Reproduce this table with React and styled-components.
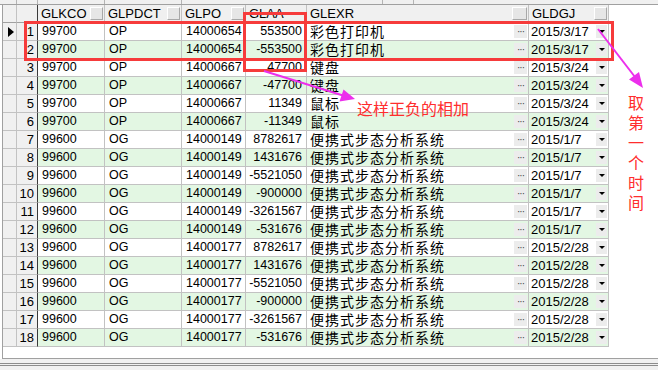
import React from 'react';
import styled, { createGlobalStyle } from 'styled-components';

const GlobalStyle = createGlobalStyle`
  html, body {
    margin: 0;
    padding: 0;
    background: #ffffff;
  }
  body {
    width: 658px;
    height: 370px;
    overflow: hidden;
    font-family: "Liberation Sans", Arial, sans-serif;
  }
`;

const COLS = '14px 21px 67px 77px 64px 61px 222px 80px';
const GREEN = '#e3f7e3';
const LINE = '#c2c2c2';
const RED = '#f63b3b';

const Screen = styled.div`
  position: relative;
  width: 658px;
  height: 370px;
  display: flex;
  flex-direction: column;
  background: #fff;
`;

const TopStrip = styled.div`
  display: flex;
  height: 4px;
  background: #f0f0f0;
  border-bottom: 1px solid #a0a0a0;
  flex: none;
`;

const TopSeg = styled.div`
  flex: none;
  width: ${p => p.$w}px;
  border-right: 1px solid #b4b4b4;
  box-sizing: border-box;
`;

const GridArea = styled.div`
  flex: none;
  height: 353px;
  margin-left: 2px;
  border-left: 1px solid #a0a0a0;
  border-bottom: 1px solid #a0a0a0;
  background: #fff;
`;

const Row = styled.div`
  display: grid;
  grid-template-columns: ${COLS};
  height: 18px;
`;

const Cell = styled.div`
  box-sizing: border-box;
  height: 100%;
  border-right: 1px solid ${LINE};
  border-bottom: 1px solid ${LINE};
  background: ${p => (p.$alt ? GREEN : '#fff')};
  color: #000;
  font-size: 12.5px;
  line-height: 17px;
  white-space: nowrap;
  overflow: hidden;
  display: flex;
  align-items: center;
  justify-content: ${p => (p.$right ? 'flex-end' : 'flex-start')};
  padding: ${p => (p.$right ? '0 4px 0 0' : '0 0 0 4px')};
`;

const HeadCell = styled(Cell)`
  background: #f0f0f0;
  border-bottom-color: #a0a0a0;
  justify-content: space-between;
  padding: 0 1px 0 3px;
  font-size: 13px;
`;

const GutterCell = styled(Cell)`
  background: #f0f0f0;
  justify-content: center;
  padding: 0;
  border-bottom-color: ${p => (p.$head ? '#a0a0a0' : LINE)};
`;

const NumCell = styled(Cell)`
  background: #f0f0f0;
  border-right: 1px solid #3a3a3a;
  justify-content: flex-end;
  padding: 0 3px 0 0;
  font-size: 13px;
  border-bottom-color: ${p => (p.$head ? '#a0a0a0' : LINE)};
`;

const Cjk = styled.span`
  display: inline-block;
  height: 17px;
  font-family: "Noto Sans CJK SC", "Liberation Sans", sans-serif;
  font-size: 14px;
  letter-spacing: 1px;
  line-height: 17px;
`;

const SplitCell = styled(Cell)`
  justify-content: space-between;
  padding: 0 1px 0 ${p => p.$pl}px;
  font-size: 13px;
`;

const HeadBtn = styled.span`
  flex: none;
  width: ${p => p.$w || 11}px;
  height: 11px;
  background: #e6e6e6;
  border-top: 1px solid #fff;
  border-left: 1px solid #fff;
  border-right: 1px solid #a8a8a8;
  border-bottom: 1px solid #a8a8a8;
`;

const EllipsisBtn = styled.span`
  flex: none;
  width: 13px;
  height: 13px;
  background: #ececec;
  color: #444;
  font-size: 10px;
  line-height: 13px;
  text-align: center;
  letter-spacing: -1px;
`;

const DropBtn = styled.span`
  flex: none;
  width: 11px;
  height: 13px;
  background: #ececec;
  display: flex;
  align-items: center;
  justify-content: center;

  &::after {
    content: '';
    border-left: 3px solid transparent;
    border-right: 3px solid transparent;
    border-top: 3px solid #000;
  }
`;

const Pointer = styled.span`
  width: 0;
  height: 0;
  border-top: 5px solid transparent;
  border-bottom: 5px solid transparent;
  border-left: 6px solid #000;
  margin-left: 2px;
`;

const BottomBar = styled.div`
  flex: 1;
  background: #f0f0f0;
  padding-top: 4px;
`;

const DoubleRule = styled.div`
  height: 1px;
  border-top: 1px solid #8c8c8c;
  border-bottom: 1px solid #8c8c8c;
`;

const RedBox = styled.div`
  position: absolute;
  left: ${p => p.$x}px;
  top: ${p => p.$y}px;
  width: ${p => p.$w}px;
  height: ${p => p.$h}px;
  box-sizing: border-box;
  border: 3px solid ${RED};
  pointer-events: none;
`;

const Note = styled.div`
  position: absolute;
  left: ${p => p.$x}px;
  top: ${p => p.$y}px;
  width: ${p => (p.$vertical ? '17px' : 'auto')};
  color: #ff2d2d;
  font-family: "Noto Sans CJK SC", sans-serif;
  font-size: 16px;
  line-height: 20px;
  white-space: ${p => (p.$vertical ? 'normal' : 'nowrap')};
  word-break: break-all;
`;

const ArrowLayer = styled.svg`
  position: absolute;
  left: 0;
  top: 0;
  pointer-events: none;
`;

const rows = [
  ['99700', 'OP', '14000654', '553500', '彩色打印机', '2015/3/17'],
  ['99700', 'OP', '14000654', '-553500', '彩色打印机', '2015/3/17'],
  ['99700', 'OP', '14000667', '47700', '键盘', '2015/3/24'],
  ['99700', 'OP', '14000667', '-47700', '键盘', '2015/3/24'],
  ['99700', 'OP', '14000667', '11349', '鼠标', '2015/3/24'],
  ['99700', 'OP', '14000667', '-11349', '鼠标', '2015/3/24'],
  ['99600', 'OG', '14000149', '8782617', '便携式步态分析系统', '2015/1/7'],
  ['99600', 'OG', '14000149', '1431676', '便携式步态分析系统', '2015/1/7'],
  ['99600', 'OG', '14000149', '-5521050', '便携式步态分析系统', '2015/1/7'],
  ['99600', 'OG', '14000149', '-900000', '便携式步态分析系统', '2015/1/7'],
  ['99600', 'OG', '14000149', '-3261567', '便携式步态分析系统', '2015/1/7'],
  ['99600', 'OG', '14000149', '-531676', '便携式步态分析系统', '2015/1/7'],
  ['99600', 'OG', '14000177', '8782617', '便携式步态分析系统', '2015/2/28'],
  ['99600', 'OG', '14000177', '1431676', '便携式步态分析系统', '2015/2/28'],
  ['99600', 'OG', '14000177', '-5521050', '便携式步态分析系统', '2015/2/28'],
  ['99600', 'OG', '14000177', '-900000', '便携式步态分析系统', '2015/2/28'],
  ['99600', 'OG', '14000177', '-3261567', '便携式步态分析系统', '2015/2/28'],
  ['99600', 'OG', '14000177', '-531676', '便携式步态分析系统', '2015/2/28'],
];

const App = () => (
  <Screen>
    <GlobalStyle />
    <TopStrip>
      <TopSeg $w={17} />
      <TopSeg $w={21} />
      <TopSeg $w={67} />
      <TopSeg $w={77} />
      <TopSeg $w={201} />
      <TopSeg $w={31} />
    </TopStrip>

    <GridArea>
      <Row>
        <GutterCell $head />
        <NumCell $head />
        <HeadCell>GLKCO<HeadBtn /></HeadCell>
        <HeadCell>GLPDCT<HeadBtn /></HeadCell>
        <HeadCell>GLPO<HeadBtn /></HeadCell>
        <HeadCell>GLAA</HeadCell>
        <HeadCell>GLEXR<HeadBtn $w={13} /></HeadCell>
        <HeadCell>GLDGJ<HeadBtn /></HeadCell>
      </Row>

      {rows.map(([co, dct, po, aa, exr, dgj], i) => {
        const alt = i % 2 === 1;
        return (
          <Row key={i}>
            <GutterCell>{i === 0 && <Pointer />}</GutterCell>
            <NumCell>{i + 1}</NumCell>
            <Cell $alt={alt}>{co}</Cell>
            <Cell $alt={alt}>{dct}</Cell>
            <Cell $alt={alt}>{po}</Cell>
            <Cell $alt={alt} $right>{aa}</Cell>
            <SplitCell $alt={alt} $pl={3}>
              <Cjk>{exr}</Cjk>
              <EllipsisBtn>···</EllipsisBtn>
            </SplitCell>
            <SplitCell $alt={alt} $pl={2}>
              {dgj}
              <DropBtn />
            </SplitCell>
          </Row>
        );
      })}
    </GridArea>

    <BottomBar>
      <DoubleRule />
    </BottomBar>

    {/* annotations drawn over the grid */}
    <RedBox $x={24} $y={21} $w={590} $h={40} />
    <RedBox $x={243} $y={12} $w={64} $h={60} />

    <ArrowLayer width="658" height="370" viewBox="0 0 658 370">
      <line x1="264" y1="71" x2="343" y2="95.5" stroke="#ec2fec" strokeWidth="2" />
      <polygon points="355,99 343.5,89.5 339.5,101.5" fill="#ec2fec" />
      <line x1="598" y1="29" x2="635" y2="77" stroke="#ec2fec" strokeWidth="2" />
      <polygon points="643,88 629,79.5 639,72" fill="#ec2fec" />
    </ArrowLayer>

    <Note $x={357} $y={98}>这样正负的相加</Note>
    <Note $x={628} $y={92} $vertical>取第一个时间</Note>
  </Screen>
);

export default App;
